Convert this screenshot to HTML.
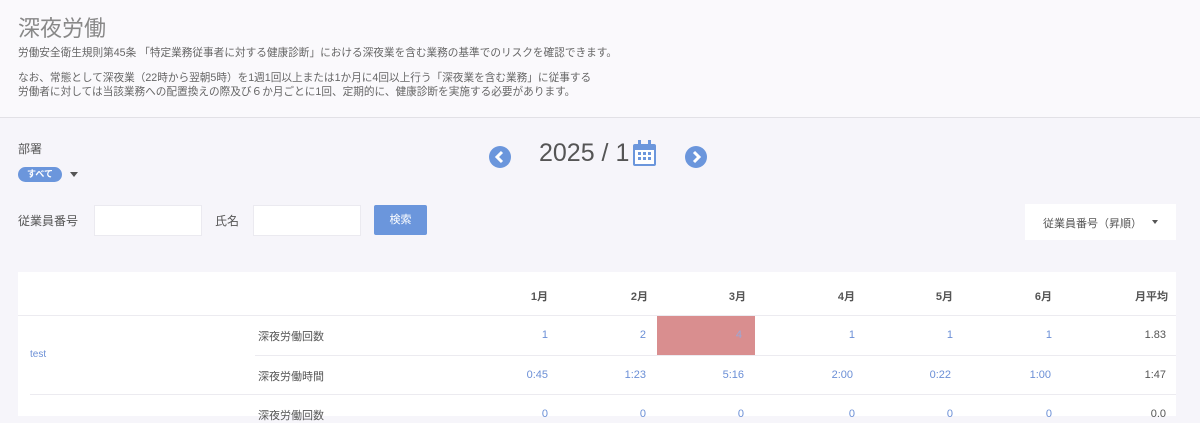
<!DOCTYPE html>
<html><head><meta charset="utf-8"><style>
body{margin:0;width:1200px;height:416px;overflow:hidden;background:#f6f5fa;font-family:"Liberation Sans","Noto Sans CJK JP",sans-serif;color:#555;position:relative}
.a{position:absolute;white-space:nowrap}
.hdr{position:absolute;left:0;top:0;width:1200px;height:117px;background:#faf9fc;border-bottom:1px solid #e2e1e6}
.inp{position:absolute;background:#fff;border:1px solid #ebeaf0;height:29px}
.tbl{position:absolute;left:18px;top:272px;width:1158px;height:144px;background:#fff}
.n{position:absolute;font-size:11px;color:#6b8fd6;text-align:right;width:60px}
.h{position:absolute;font-size:11px;color:#555;text-align:right;width:60px;font-weight:bold}
.line{position:absolute;height:1px;background:#ecebf0}
</style></head><body>
<div class="hdr"></div>
<div class="a" style="left:18px;top:11px;font-size:22px;color:#888">深夜労働</div>
<div class="a" style="left:18px;top:45px;font-size:10.65px;color:#666">労働安全衛生規則第45条 「特定業務従事者に対する健康診断」における深夜業を含む業務の基準でのリスクを確認できます。</div>
<div class="a" style="left:18px;top:71px;font-size:10.65px;color:#666;line-height:14px">なお、常態として深夜業（22時から翌朝5時）を1週1回以上または1か月に4回以上行う「深夜業を含む業務」に従事する<br>労働者に対しては当該業務への配置換えの際及び６か月ごとに1回、定期的に、健康診断を実施する必要があります。</div>

<div class="a" style="left:18px;top:140px;font-size:12px;color:#555">部署</div>
<div class="a" style="left:18px;top:167px;width:44px;height:15px;border-radius:8px;background:#6b96dc;color:#fff;font-size:9px;line-height:15px;text-align:center;font-weight:bold">すべて</div>
<div class="a" style="left:70px;top:172px;width:0;height:0;border-left:4px solid transparent;border-right:4px solid transparent;border-top:5px solid #555"></div>

<svg class="a" style="left:488px;top:145px" width="24" height="24"><circle cx="12" cy="12" r="11" fill="#6b96dc"/><path d="M14 7l-5 5 5 5" stroke="#fff" stroke-width="3" fill="none"/></svg>
<div class="a" style="left:539px;top:139px;font-size:25px;color:#555">2025 / 1</div>
<svg class="a" style="left:632px;top:140px" width="25" height="27"><rect x="1" y="4" width="23" height="22" rx="2" fill="#6b96dc"/><rect x="6" y="0" width="3" height="6" fill="#6b96dc"/><rect x="16" y="0" width="3" height="6" fill="#6b96dc"/><rect x="3" y="10" width="19" height="14" fill="#fff"/><g fill="#6b96dc"><rect x="6" y="12" width="3" height="3"/><rect x="11" y="12" width="3" height="3"/><rect x="16" y="12" width="3" height="3"/><rect x="6" y="17" width="3" height="3"/><rect x="11" y="17" width="3" height="3"/><rect x="16" y="17" width="3" height="3"/></g></svg>
<svg class="a" style="left:684px;top:145px" width="24" height="24"><circle cx="12" cy="12" r="11" fill="#6b96dc"/><path d="M10 7l5 5-5 5" stroke="#fff" stroke-width="3" fill="none"/></svg>

<div class="a" style="left:18px;top:212px;font-size:12px">従業員番号</div>
<div class="inp" style="left:94px;top:205px;width:106px"></div>
<div class="a" style="left:215px;top:212px;font-size:12px">氏名</div>
<div class="inp" style="left:253px;top:205px;width:106px"></div>
<div class="a" style="left:374px;top:205px;width:53px;height:30px;background:#6b96dc;border-radius:2px;color:#fff;font-size:11px;line-height:30px;text-align:center">検索</div>
<div class="a" style="left:1025px;top:204px;width:151px;height:36px;background:#fff"></div>
<div class="a" style="left:1043px;top:215px;font-size:11px;color:#555">従業員番号（昇順）</div>
<div class="a" style="left:1152px;top:220px;width:0;height:0;border-left:3px solid transparent;border-right:3px solid transparent;border-top:4px solid #555"></div>

<div class="tbl"></div>
<div class="line" style="left:18px;top:315px;width:1158px"></div>
<div class="line" style="left:255px;top:355px;width:921px"></div>
<div class="line" style="left:30px;top:394px;width:1146px"></div>
<div class="a" style="left:657px;top:316px;width:98px;height:39px;background:#d98e8f"></div>

<div class="h" style="left:488px;top:288px">1月</div>
<div class="h" style="left:588px;top:288px">2月</div>
<div class="h" style="left:686px;top:288px">3月</div>
<div class="h" style="left:795px;top:288px">4月</div>
<div class="h" style="left:893px;top:288px">5月</div>
<div class="h" style="left:992px;top:288px">6月</div>
<div class="h" style="left:1108px;top:288px">月平均</div>

<div class="a" style="left:30px;top:349px;font-size:10px;color:#6b8fd6">test</div>
<div class="a" style="left:258px;top:328px;font-size:11px;color:#555">深夜労働回数</div>
<div class="a" style="left:258px;top:368px;font-size:11px;color:#555">深夜労働時間</div>
<div class="a" style="left:258px;top:407px;font-size:11px;color:#555">深夜労働回数</div>

<div class="n" style="left:488px;top:329px">1</div>
<div class="n" style="left:586px;top:329px">2</div>
<div class="n" style="left:682px;top:329px;color:#9aa8d8">4</div>
<div class="n" style="left:795px;top:329px">1</div>
<div class="n" style="left:893px;top:329px">1</div>
<div class="n" style="left:992px;top:329px">1</div>
<div class="n" style="left:1106px;top:329px;color:#555">1.83</div>

<div class="n" style="left:488px;top:369px">0:45</div>
<div class="n" style="left:586px;top:369px">1:23</div>
<div class="n" style="left:684px;top:369px">5:16</div>
<div class="n" style="left:793px;top:369px">2:00</div>
<div class="n" style="left:891px;top:369px">0:22</div>
<div class="n" style="left:991px;top:369px">1:00</div>
<div class="n" style="left:1106px;top:369px;color:#555">1:47</div>

<div class="n" style="left:488px;top:408px">0</div>
<div class="n" style="left:586px;top:408px">0</div>
<div class="n" style="left:684px;top:408px">0</div>
<div class="n" style="left:795px;top:408px">0</div>
<div class="n" style="left:893px;top:408px">0</div>
<div class="n" style="left:992px;top:408px">0</div>
<div class="n" style="left:1106px;top:408px;color:#555">0.0</div>
</body></html>
